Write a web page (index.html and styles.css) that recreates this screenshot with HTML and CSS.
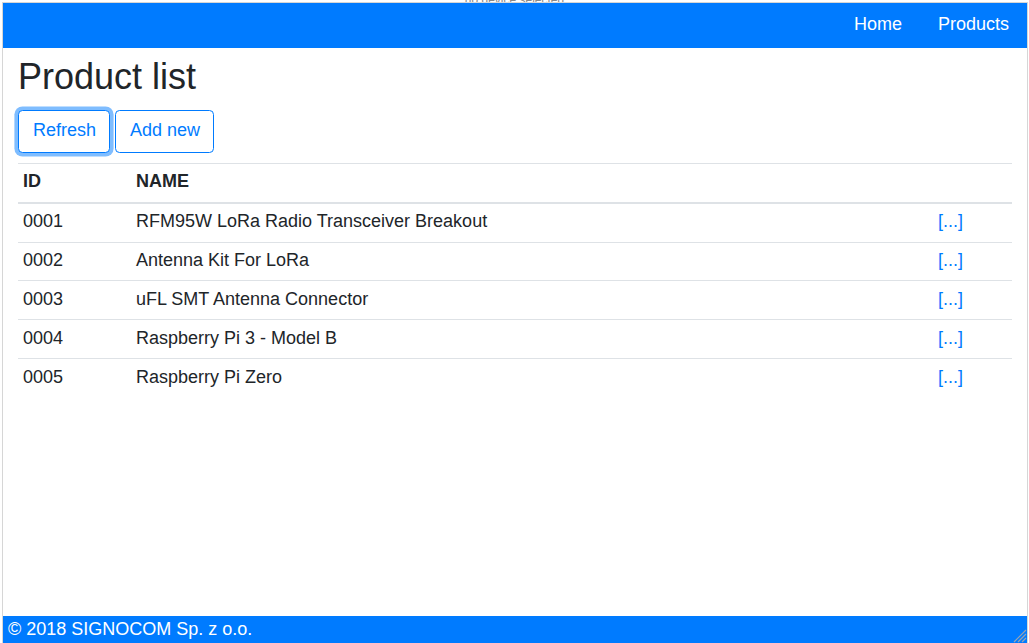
FILE: index.html
```html
<!DOCTYPE html>
<html>
<head>
<meta charset="utf-8">
<link rel="stylesheet" href="styles.css">
</head>
<body>
<div class="device-label">no device selected</div>
<div class="frame">
  <nav class="navbar">
    <a class="nav-link" href="#">Home</a>
    <a class="nav-link" href="#">Products</a>
  </nav>
  <main class="main">
    <h1 class="title">Product list</h1>
    <div class="actions">
      <button class="btn btn-focus">Refresh</button>
      <button class="btn">Add new</button>
    </div>
    <table class="table">
      <colgroup>
        <col class="col-id">
        <col class="col-name">
        <col class="col-more">
      </colgroup>
      <thead>
        <tr><th>ID</th><th>NAME</th><th></th></tr>
      </thead>
      <tbody>
        <tr><td>0001</td><td>RFM95W LoRa Radio Transceiver Breakout</td><td><a href="#">[...]</a></td></tr>
        <tr><td>0002</td><td>Antenna Kit For LoRa</td><td><a href="#">[...]</a></td></tr>
        <tr><td>0003</td><td>uFL SMT Antenna Connector</td><td><a href="#">[...]</a></td></tr>
        <tr><td>0004</td><td>Raspberry Pi 3 - Model B</td><td><a href="#">[...]</a></td></tr>
        <tr><td>0005</td><td>Raspberry Pi Zero</td><td><a href="#">[...]</a></td></tr>
      </tbody>
    </table>
  </main>
  <footer class="footer">© 2018 SIGNOCOM Sp. z o.o.</footer>
  <svg class="grip" width="14" height="14" viewBox="0 0 14 14">
    <path d="M13 1 L1 13 M13 5 L5 13 M13 9 L9 13" stroke="#9aa4b0" stroke-width="1.2" fill="none"/>
  </svg>
</div>
</body>
</html>
```

FILE: styles.css
```css
html, body {
  margin: 0;
  padding: 0;
  background: #fff;
  overflow: hidden;
}
body {
  font-family: "Liberation Sans", Arial, sans-serif;
  font-size: 18px;
  line-height: 1.5;
  color: #212529;
  position: relative;
}
.device-label {
  position: absolute;
  top: -9px;
  left: 0;
  right: 0;
  text-align: center;
  font-size: 12px;
  color: #888;
  z-index: 0;
}
.frame {
  position: relative;
  z-index: 1;
  margin: 2px 0 0 2px;
  width: 1026px;
  height: 641px;
  box-sizing: border-box;
  border: 1px solid #d6d6d6;
  border-bottom: none;
  display: flex;
  flex-direction: column;
  background: #fff;
}
.navbar {
  height: 45px;
  flex: none;
  background: #007bff;
  display: flex;
  justify-content: flex-end;
  align-items: center;
  padding: 0 0 2px;
  box-sizing: border-box;
}
.nav-link {
  color: #fff;
  text-decoration: none;
  padding: 0 18px;
  font-size: 18px;
  line-height: 27px;
}
.main {
  flex: 1;
  padding: 0 15px;
}
.title {
  margin: 7px 0 0;
  font-size: 36px;
  font-weight: 400;
  line-height: 43px;
}
.actions {
  margin-top: 12px;
  display: flex;
  gap: 5px;
}
.btn {
  font-family: inherit;
  font-size: 18px;
  line-height: 27px;
  padding: 6px 13px 8px 14px;
  height: 43px;
  box-sizing: border-box;
  color: #007bff;
  background: #fff;
  border: 1px solid #007bff;
  border-radius: 4.5px;
}
.btn-focus {
  box-shadow: 0 0 0 3.6px rgba(0, 123, 255, 0.5);
}
.table {
  margin-top: 10px;
  width: 100%;
  border-collapse: collapse;
  table-layout: fixed;
}
.col-id { width: 113px; }
.col-more { width: 79px; }
.table th, .table td {
  text-align: left;
  padding: 4.6px 5px 6.2px;
  line-height: 27px;
  border-top: 1px solid #dee2e6;
  vertical-align: top;
}
.table th {
  font-weight: 700;
  padding-top: 3.6px;
  padding-bottom: 7.2px;
  border-bottom: 2px solid #dee2e6;
}
.table a {
  color: #007bff;
  text-decoration: none;
}
.footer {
  flex: none;
  height: 27px;
  background: #007bff;
  color: #fff;
  font-size: 18px;
  line-height: 27px;
  padding-left: 5px;
}
.grip {
  position: absolute;
  right: 0;
  bottom: 0;
}
```
